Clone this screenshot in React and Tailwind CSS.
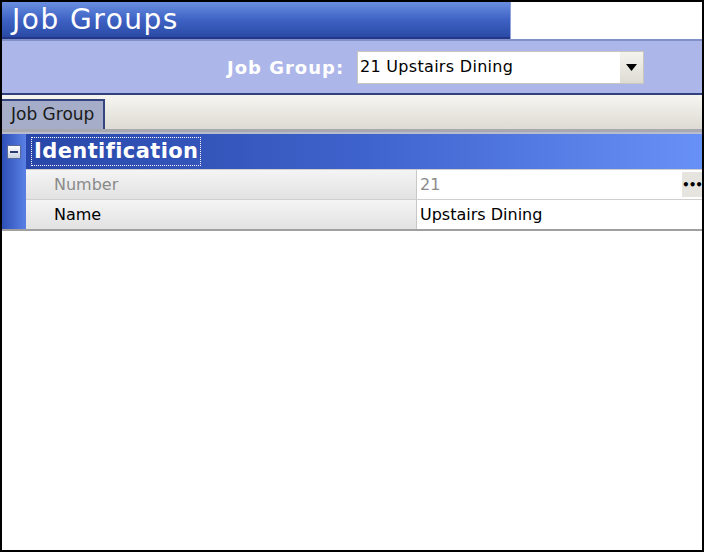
import React from "react";

const font = { fontFamily: "Tahoma, 'DejaVu Sans', sans-serif" };

const TitleBar = () => (
  <div className="flex h-[37px] shrink-0">
    <div className="w-[508px] h-full bg-gradient-to-b from-[#6a8fe0] via-[#3f63c4] to-[#2a4aa6] border-b-2 border-[#22378a] flex items-center pl-[10px]">
      <span className="text-white text-[28px] leading-none tracking-[1.5px]">Job Groups</span>
    </div>
    <div className="flex-1 bg-white border-l border-[#8fa4dc]" />
  </div>
);

const Selector = () => (
  <div className="h-[56px] shrink-0 bg-[#adb6e9] border-t-2 border-[#8290c8] border-b-2 border-b-[#33427f] flex items-center pl-[225px]">
    <span className="text-white font-bold text-[18px] tracking-[1px] w-[130px]">Job Group:</span>
    <div className="w-[287px] h-[33px] border border-[#c9c7bd] bg-white flex">
      <div className="flex-1 flex items-center pl-[2px] text-[16px] tracking-[0.3px] text-black">21 Upstairs Dining</div>
      <div className="w-[23px] h-full bg-gradient-to-b from-[#f4f3ee] to-[#dedcd2] flex items-center justify-center">
        <svg width="11" height="7" viewBox="0 0 11 7">
          <path d="M0 0H11L5.5 7Z" fill="#000" />
        </svg>
      </div>
    </div>
  </div>
);

const TabStrip = () => (
  <div className="h-[37px] shrink-0 bg-gradient-to-b from-[#f6f5f1] to-[#dddbd3] border-b-[3px] border-[#a8a8b0] flex items-end">
    <div className="w-[103px] h-[30px] bg-[#a5adc9] border-t-2 border-r-2 border-[#34447e] flex items-center pl-[9px] text-[17px] text-[#1a1a1a]">
      Job Group
    </div>
  </div>
);

const Row = ({ label, value, muted, dots }) => (
  <div className="flex h-[30px] border-t border-[#cfcfcf]">
    <div className={`w-[391px] bg-gradient-to-b from-[#f4f4f4] to-[#e2e2e2] border-r border-[#c8c8c8] flex items-center pl-[28px] text-[16px] ${muted ? "text-[#8a8a8a]" : "text-black"}`}>
      {label}
    </div>
    <div className={`flex-1 bg-white flex items-center pl-[3px] text-[16px] ${muted ? "text-[#8a8a8a]" : "text-black"}`}>
      <span className="flex-1">{value}</span>
      {dots && (
        <div className="w-[20px] h-[25px] bg-[#e6e4de] flex items-center justify-center text-black font-bold text-[12px] leading-none tracking-[-1px]">
          •••
        </div>
      )}
    </div>
  </div>
);

const PropertyGrid = () => (
  <div className="flex border-t-2 border-[#b8bccc] border-b-2 border-b-[#a0a0a0]">
    <div className="w-[24px] bg-gradient-to-r from-[#2e4fb6] to-[#5a80e6] flex justify-center pt-[11px]">
      <div className="w-[14px] h-[14px] bg-gradient-to-b from-white to-[#c8d0e0] border border-[#5a6a98] flex items-center justify-center">
        <div className="w-[8px] h-[2px] bg-[#2a3a70]" />
      </div>
    </div>
    <div className="flex-1 flex flex-col">
      <div className="h-[35px] bg-gradient-to-r from-[#2847a8] via-[#3f63cc] to-[#6891f7] flex items-center pl-[5px]">
        <span className="text-white font-bold text-[21px] tracking-[0.4px] leading-none px-[2px] py-[3px] border border-dotted border-white">Identification</span>
      </div>
      <Row label="Number" value="21" muted dots />
      <Row label="Name" value="Upstairs Dining" />
    </div>
  </div>
);

export default function App() {
  return (
    <div className="w-[704px] h-[552px] border-2 border-black bg-white flex flex-col overflow-hidden" style={font}>
      <TitleBar />
      <Selector />
      <TabStrip />
      <PropertyGrid />
      <div className="flex-1 bg-white" />
    </div>
  );
}
